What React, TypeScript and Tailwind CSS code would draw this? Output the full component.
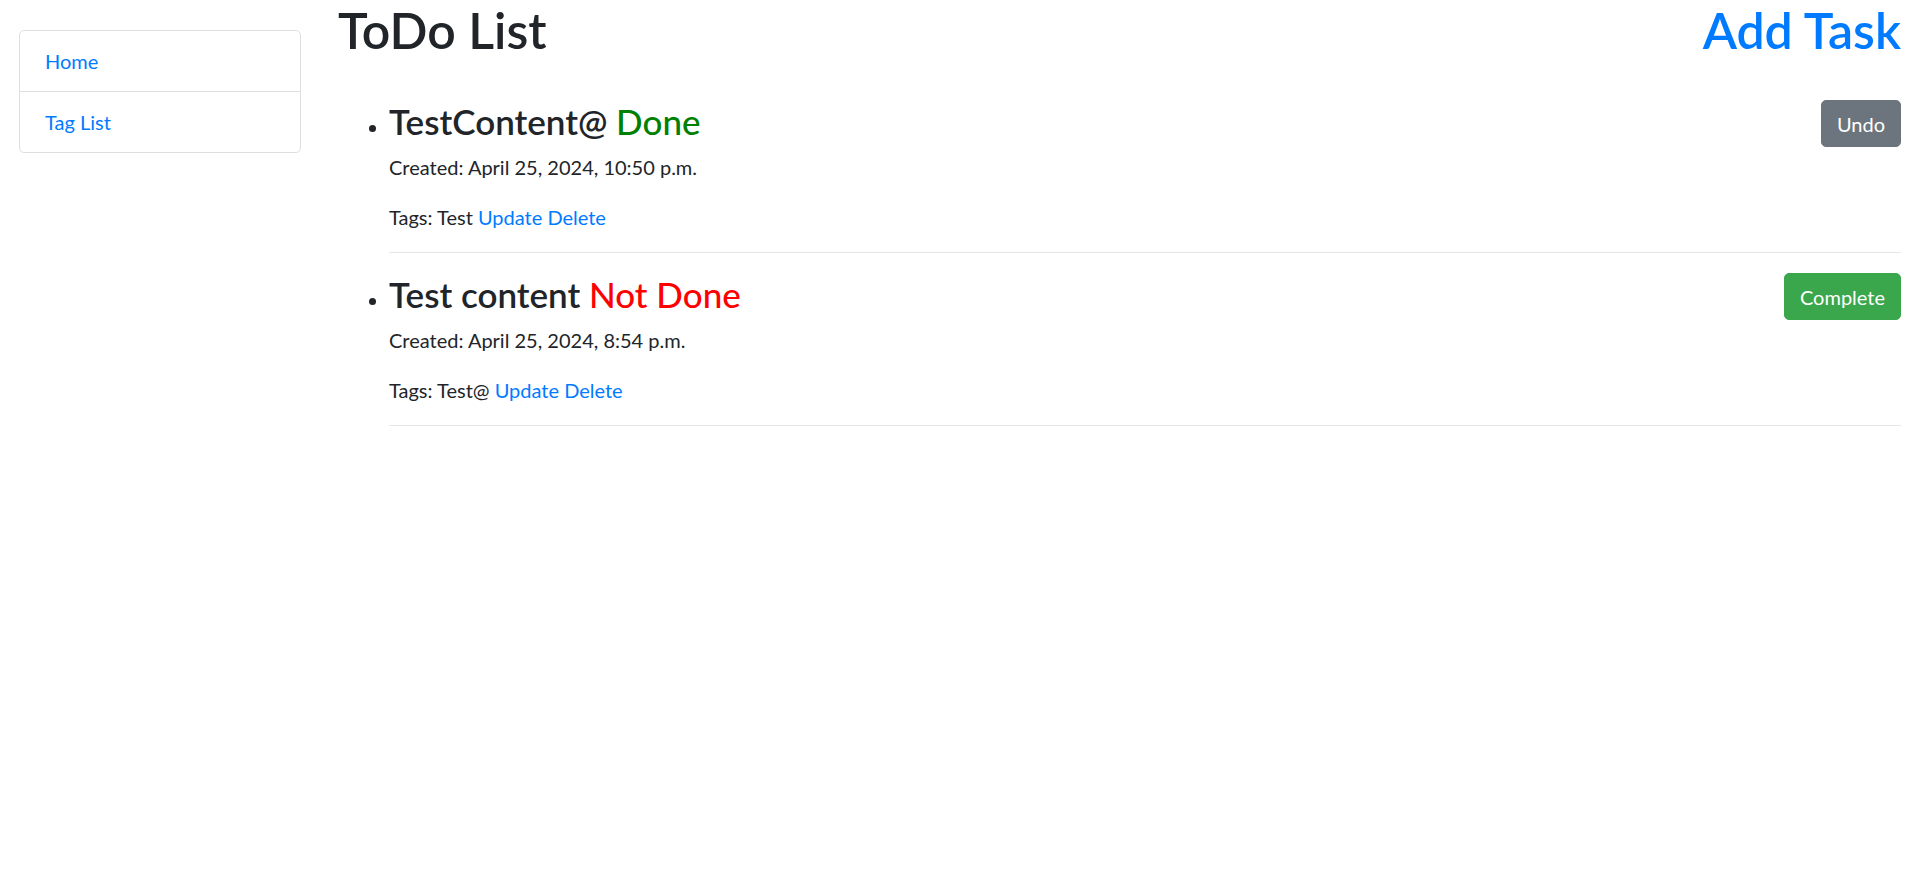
const tasks = [
  {
    title: "TestContent@",
    done: true,
    created: "April 25, 2024, 10:50 p.m.",
    tags: "Test",
  },
  {
    title: "Test content",
    done: false,
    created: "April 25, 2024, 8:54 p.m.",
    tags: "Test@",
  },
];

export default function App() {
  return (
    <div
      className="flex min-h-screen bg-white text-[#212529] text-[20px] leading-[30px]"
      style={{ fontFamily: 'Lato, "Open Sans", sans-serif' }}
    >
      <aside className="w-[338px] shrink-0 pl-[19px] pr-[37px] pt-[30px]">
        <div className="border border-[#dfdfdf] rounded-[5px]">
          <a href="#" className="block px-[25px] py-[15px] text-[#007bff] border-b border-[#dfdfdf]">
            Home
          </a>
          <a href="#" className="block px-[25px] py-[15px] text-[#007bff]">
            Tag List
          </a>
        </div>
      </aside>

      <main className="flex-1 pr-[9px]">
        <div className="flex justify-between items-start">
          <h1 className="text-[50px] leading-[60px] font-semibold">ToDo List</h1>
          <h1 className="text-[50px] leading-[60px] font-semibold">
            <a href="#" className="text-[#007bff]">Add Task</a>
          </h1>
        </div>

        <ul className="list-disc pl-[51px] mt-[40px]">
          {tasks.map((t) => (
            <li key={t.title}>
              <h3 className="flex justify-between items-start h-[42px] mb-[10px] text-[35px] leading-[42px] font-semibold">
                <span>
                  {t.title}{" "}
                  {t.done ? (
                    <span className="font-medium text-[#008000]">Done</span>
                  ) : (
                    <span className="font-medium text-[#ff0000]">Not Done</span>
                  )}
                </span>
                {t.done ? (
                  <button className="shrink-0 px-[15px] py-[7.5px] text-[20px] leading-[30px] font-normal text-white bg-[#6c757d] border border-[#6c757d] rounded-[5px]">
                    Undo
                  </button>
                ) : (
                  <button className="shrink-0 px-[15px] py-[7.5px] text-[20px] leading-[30px] font-normal text-white bg-[#3aa74c] border border-[#3aa74c] rounded-[5px]">
                    Complete
                  </button>
                )}
              </h3>
              <p className="mb-[20px]">Created: {t.created}</p>
              <p className="mb-[20px]">
                Tags: {t.tags}{" "}
                <a href="#" className="text-[#007bff]">Update</a>{" "}
                <a href="#" className="text-[#007bff]">Delete</a>
              </p>
              <hr className="mb-[20px] border-0 border-t border-[#e6e6e6]" />
            </li>
          ))}
        </ul>
      </main>
    </div>
  );
}
